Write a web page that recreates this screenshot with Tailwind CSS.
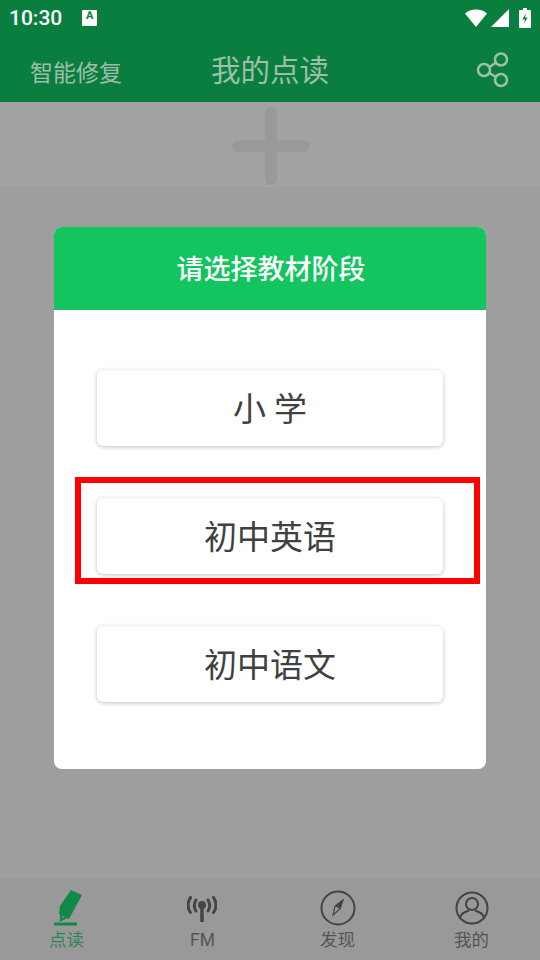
<!DOCTYPE html>
<html lang="zh">
<head>
<meta charset="utf-8">
<title>我的点读</title>
<script src="https://cdn.jsdelivr.net/npm/@tailwindcss/browser@4"></script>
</head>
<body class="m-0">
<div class="relative w-[540px] h-[960px] overflow-hidden flex flex-col bg-[#9e9e9e] font-['Roboto','Noto_Sans_CJK_SC',sans-serif]">

  <!-- status bar -->
  <div class="h-[36px] shrink-0 bg-[#0a7e3e] flex items-center pl-[9px] pr-[9px] text-white">
    <span class="text-[21px] font-medium leading-none">10:30</span>
    <div class="ml-[20px] w-[15px] h-[16px] bg-white rounded-[1px] flex items-start justify-center">
      <span class="text-[11px] font-bold leading-[12px] text-[#0a7e3e]">A</span>
    </div>
    <div class="ml-auto flex items-center gap-[4px]">
      <svg width="22" height="18" viewBox="0 0 22 18"><path d="M0 4.500C3 2 6.500 .5 11 .5s8 1.500 11 4L11 18z" fill="#fff"/></svg>
      <svg width="18" height="18" viewBox="0 0 18 18"><path d="M18 0v18H0z" fill="#fff"/></svg>
      <svg class="ml-[6px]" width="12" height="20" viewBox="0 0 12 20"><path d="M4 0h4v2h3a1 1 0 0 1 1 1v16a1 1 0 0 1-1 1H1a1 1 0 0 1-1-1V3a1 1 0 0 1 1-1h3z" fill="#fff"/><path d="M7 5 3.500 11.500H6L5 16l3.500-6.500H6z" fill="#0a7e3e"/></svg>
    </div>
  </div>

  <!-- title bar -->
  <div class="relative h-[66px] shrink-0 bg-[#0a7e3e] flex items-center justify-center text-[#9dbfa9]">
    <span class="absolute left-[30px] top-[21px] text-[23px] leading-[34px]">智能修复</span>
    <span class="text-[29.500px] leading-none mt-[5px]">我的点读</span>
    <svg class="absolute right-[30px] top-[16px]" width="34" height="36" viewBox="0 0 34 36" fill="none" stroke="#9dbfa9" stroke-width="2.500">
      <circle cx="25" cy="7.500" r="6"/><circle cx="8" cy="18" r="6"/><circle cx="25" cy="28" r="6"/>
      <path d="M13.500 15 20 10.500M13.500 21 20 25"/>
    </svg>
  </div>

  <!-- add strip -->
  <div class="h-[85px] shrink-0 bg-[#a3a3a3] flex items-center justify-center">
    <svg class="mt-[2px] ml-[1px]" width="78" height="78" viewBox="0 0 78 78" fill="#999999"><rect x="33" y="0" width="12" height="78" rx="6"/><rect x="0" y="33" width="78" height="12" rx="6"/></svg>
  </div>

  <div class="flex-1"></div>

  <!-- tab bar -->
  <div class="h-[82px] shrink-0 bg-[#999999] grid grid-cols-4 text-[#555555] text-[17.500px]">
    <div class="relative flex flex-col items-center text-[#2f8551]">
      <svg class="absolute top-[11px] left-[54px]" width="30" height="38" viewBox="0 0 30 38">
        <path d="M17 1 28 6 15 30 5 25 6 17z" fill="#128a47"/>
        <path d="M8 20 7 31 15 27" fill="none" stroke="#128a47" stroke-width="2.500"/>
        <rect x="0" y="33.500" width="23" height="3" fill="#128a47"/>
      </svg>
      <span class="mt-[50px] ml-[-2px] leading-[24px]">点读</span>
    </div>
    <div class="relative flex flex-col items-center">
      <svg class="absolute top-[18px] left-[52px]" width="30" height="26" viewBox="0 0 30 26" fill="none" stroke="#444" stroke-width="3" stroke-linecap="round">
        <circle cx="15" cy="9" r="4" fill="#444" stroke="none"/>
        <path d="M15 10v16" stroke-width="3.500" stroke-linecap="butt"/>
        <path d="M9 4q-3.500 5.500 0 11M21 4q3.500 5.500 0 11M3.500 1.500q-5 8 0 15M26.500 1.500q5 8 0 15"/>
      </svg>
      <span class="mt-[50px] leading-[24px]">FM</span>
    </div>
    <div class="relative flex flex-col items-center">
      <svg class="absolute top-[12px] left-[50px]" width="36" height="36" viewBox="0 0 36 36" fill="none" stroke="#444" stroke-width="2">
        <circle cx="18" cy="18" r="16.500"/>
        <path d="M23 10 20 19 13 25 15 16z" stroke-width="1.200"/>
        <path d="M23 10 15 16 20 19z" fill="#444" stroke="none"/>
      </svg>
      <span class="mt-[50px] leading-[24px]">发现</span>
    </div>
    <div class="relative flex flex-col items-center">
      <svg class="absolute top-[13px] left-[50px]" width="34" height="34" viewBox="0 0 34 34" fill="none" stroke="#444" stroke-width="2">
        <circle cx="17" cy="17" r="15.500"/>
        <circle cx="17" cy="13" r="6"/>
        <path d="M5 27.500c0-5 5-6.500 9-8M29 27.500c0-5-5-6.500-9-8"/>
      </svg>
      <span class="mt-[50px] ml-[-2px] leading-[24px]">我的</span>
    </div>
  </div>

  <!-- dialog -->
  <div class="absolute left-[54px] top-[227px] w-[432px] h-[542px] bg-white rounded-[8px] overflow-hidden flex flex-col items-center">
    <div class="w-full h-[83px] shrink-0 pt-[4px] pl-[2px] bg-[#12c55f] flex items-center justify-center text-white text-[27px] font-medium">请选择教材阶段</div>
    <div class="flex flex-col gap-[52px] mt-[60px]">
      <div class="w-[346px] h-[76px] pt-[3px] bg-white rounded-[6px] shadow-[0_1px_4px_rgba(0,0,0,0.25)] flex items-center justify-center text-[#404040] text-[33px]">小 学</div>
      <div class="w-[346px] h-[76px] pt-[3px] bg-white rounded-[6px] shadow-[0_1px_4px_rgba(0,0,0,0.25)] flex items-center justify-center text-[#404040] text-[33px]">初中英语</div>
      <div class="w-[346px] h-[76px] pt-[3px] bg-white rounded-[6px] shadow-[0_1px_4px_rgba(0,0,0,0.25)] flex items-center justify-center text-[#404040] text-[33px]">初中语文</div>
    </div>
  </div>

  <!-- red annotation box -->
  <div class="absolute left-[75px] top-[477px] w-[405px] h-[107px] border-[6px] border-[#ff0000]"></div>
</div>
</body>
</html>
